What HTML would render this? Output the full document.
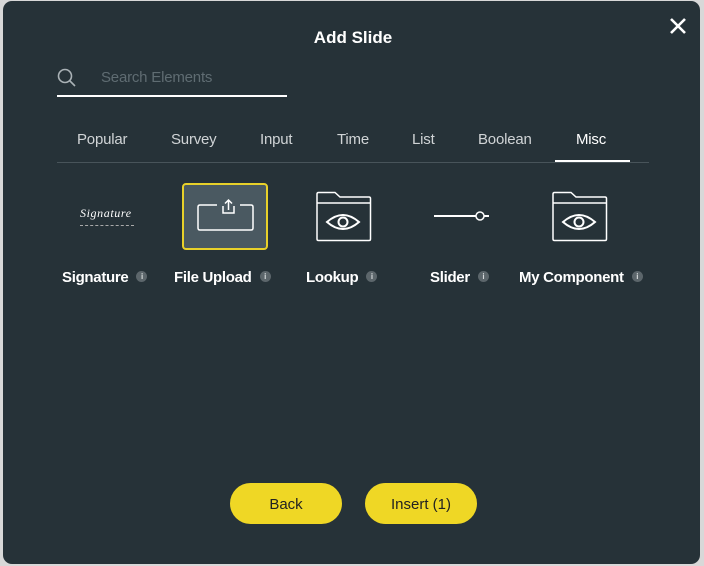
<!DOCTYPE html>
<html><head><style>
body{margin:0;width:704px;height:566px;background:#d8d8d8;font-family:"Liberation Sans",sans-serif;position:relative;overflow:hidden}
.m{position:absolute;left:3px;top:1px;width:697px;height:563px;background:#263238;border-radius:9px}
.a{position:absolute;color:#fff;white-space:nowrap}
.tab{position:absolute;top:131px;font-size:15px;color:#d0d4d6;letter-spacing:-0.2px}
.lbl{position:absolute;top:269px;font-size:15px;font-weight:bold;color:#fff;white-space:nowrap;letter-spacing:-0.3px}
.i{display:inline-block;width:11px;height:11px;border-radius:50%;background:#5c666b;color:#d5d9db;font-size:8px;line-height:11px;text-align:center;vertical-align:3px;margin-left:8px;font-weight:bold}
.btn{position:absolute;top:483px;width:112px;height:41px;border-radius:21px;background:#efd725;color:#222;font-size:15px;text-align:center;line-height:43px}
</style></head><body>
<div class="m"></div>
<div class="a" style="left:0;width:706px;text-align:center;top:28px;font-size:17px;font-weight:bold">Add Slide</div>
<svg style="position:absolute;left:668px;top:16px" width="20" height="20"><path d="M3 3L17 17M17 3L3 17" stroke="#fff" stroke-width="2.6"/></svg>
<svg style="position:absolute;left:56px;top:67px" width="22" height="22"><circle cx="9" cy="9" r="6.5" stroke="#aab2b6" stroke-width="1.6" fill="none"/><path d="M14 14L19 19" stroke="#aab2b6" stroke-width="1.6"/></svg>
<div class="a" style="left:101px;top:69px;font-size:15px;color:#5f6c72;letter-spacing:-0.2px">Search Elements</div>
<div style="position:absolute;left:57px;top:95px;width:230px;height:1.5px;background:#fff"></div>
<div class="tab" style="left:77px">Popular</div>
<div class="tab" style="left:171px">Survey</div>
<div class="tab" style="left:260px">Input</div>
<div class="tab" style="left:337px">Time</div>
<div class="tab" style="left:412px">List</div>
<div class="tab" style="left:478px">Boolean</div>
<div class="tab" style="left:576px;color:#fff">Misc</div>
<div style="position:absolute;left:57px;top:162px;width:592px;height:1px;background:#48545a"></div>
<div style="position:absolute;left:555px;top:160px;width:75px;height:2px;background:#fff"></div>
<div class="a" style="left:80px;top:206px;font-family:'Liberation Serif',serif;font-style:italic;font-size:12px;letter-spacing:.6px">Signature</div>
<div style="position:absolute;left:80px;top:225px;width:54px;border-top:1px dashed #aaa"></div>
<div style="position:absolute;left:182px;top:183px;width:82px;height:63px;background:#4a5961;border:2px solid #e8d12a;border-radius:4px"></div>
<svg style="position:absolute;left:196px;top:198px" width="60" height="36"><path d="M21 7H4Q2 7 2 9V30Q2 32 4 32H55Q57 32 57 30V9Q57 7 55 7H44" stroke="#fff" stroke-width="1.5" fill="none"/><path d="M27 8V15H38V8M32.5 12V2M29 5.5L32.5 2L36 5.5" stroke="#fff" stroke-width="1.5" fill="none"/></svg>
<svg style="position:absolute;left:315px;top:191px" width="58" height="52"><path d="M2 3Q2 1.5 3.5 1.5H20L25 6H54Q55.5 6 55.5 7.5V48Q55.5 49.5 54 49.5H3.5Q2 49.5 2 48ZM2 12H55.5" stroke="#fff" stroke-width="1.5" fill="none"/><path d="M12 31Q28 17 44 31Q28 45 12 31Z" stroke="#fff" stroke-width="2" fill="none"/><circle cx="28" cy="31" r="4.5" stroke="#fff" stroke-width="2" fill="none"/></svg>
<svg style="position:absolute;left:551px;top:191px" width="58" height="52"><path d="M2 3Q2 1.5 3.5 1.5H20L25 6H54Q55.5 6 55.5 7.5V48Q55.5 49.5 54 49.5H3.5Q2 49.5 2 48ZM2 12H55.5" stroke="#fff" stroke-width="1.5" fill="none"/><path d="M12 31Q28 17 44 31Q28 45 12 31Z" stroke="#fff" stroke-width="2" fill="none"/><circle cx="28" cy="31" r="4.5" stroke="#fff" stroke-width="2" fill="none"/></svg>
<svg style="position:absolute;left:432px;top:208px" width="60" height="16"><path d="M2 8H44M52 8H57" stroke="#fff" stroke-width="2"/><circle cx="48" cy="8" r="4" stroke="#fff" stroke-width="1.5" fill="none"/></svg>
<div class="lbl" style="left:62px">Signature<span class="i">i</span></div>
<div class="lbl" style="left:174px">File Upload<span class="i">i</span></div>
<div class="lbl" style="left:306px">Lookup<span class="i">i</span></div>
<div class="lbl" style="left:430px">Slider<span class="i">i</span></div>
<div class="lbl" style="left:519px">My Component<span class="i">i</span></div>
<div class="btn" style="left:230px">Back</div>
<div class="btn" style="left:365px">Insert (1)</div>
</body></html>
